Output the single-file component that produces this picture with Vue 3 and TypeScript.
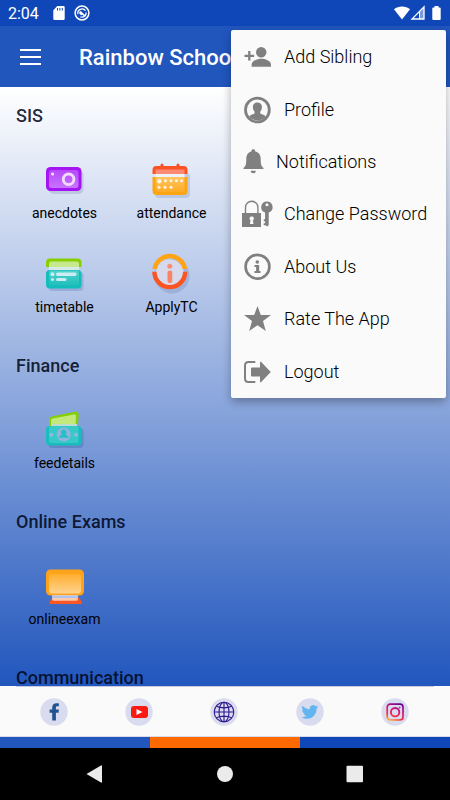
<script setup lang="ts">
interface Tile {
  id: string
  label: string
}
interface Section {
  title: string
  tiles: Tile[]
}
interface MenuEntry {
  id: string
  label: string
}

const sections: Section[] = [
  {
    title: 'SIS',
    tiles: [
      { id: 'camera', label: 'anecdotes' },
      { id: 'calendar', label: 'attendance' },
      { id: 'table', label: 'timetable' },
      { id: 'info', label: 'ApplyTC' },
    ],
  },
  { title: 'Finance', tiles: [{ id: 'money', label: 'feedetails' }] },
  { title: 'Online Exams', tiles: [{ id: 'screen', label: 'onlineexam' }] },
  { title: 'Communication', tiles: [] },
]

const menu: MenuEntry[] = [
  { id: 'add', label: 'Add Sibling' },
  { id: 'profile', label: 'Profile' },
  { id: 'bell', label: 'Notifications' },
  { id: 'lock', label: 'Change Password' },
  { id: 'about', label: 'About Us' },
  { id: 'star', label: 'Rate The App' },
  { id: 'logout', label: 'Logout' },
]

const socials: string[] = ['Facebook', 'YouTube', 'Website', 'Twitter', 'Instagram']
</script>

<template>
  <div class="screen">
    <div class="status">
      <span class="clock">2:04</span>
      <svg class="sd" viewBox="0 0 12 14" aria-hidden="true">
        <path d="M4.300 0H10.500a1.200 1.200 0 0 1 1.200 1.200V12.800a1.200 1.200 0 0 1-1.200 1.200H1.500a1.200 1.200 0 0 1-1.200-1.200V4.200z" fill="#fff" />
        <path d="M4.500 2v2.500M6.900 2v2.500M9.300 2v2.500" stroke="#0f47b8" stroke-width="1" />
      </svg>
      <svg class="dnd" viewBox="0 0 16 16" aria-hidden="true">
        <circle cx="8" cy="8" r="6.900" fill="none" stroke="#fff" stroke-width="1.500" />
        <path d="M3.900 9.200A4.300 4.300 0 0 1 11.500 5.600M12.200 7.500a4.300 4.300 0 0 1-5.800 4.300" fill="none" stroke="#fff" stroke-width="1.300" />
        <path d="M5.300 6.800l1.500-.8 5.200 5-1.300.8L8 9.600l-.7 1-2-1.800z" fill="#fff" />
      </svg>
      <svg class="signals" viewBox="0 0 50 16" aria-hidden="true">
        <path d="M1 4.300C5.500.5 12.500.5 17 4.300L9 14.500z" fill="#fff" />
        <path d="M31 1.800V14H19z" fill="none" stroke="#fff" stroke-width="1.300" />
        <path d="M31 2v12h-5V7.500z" fill="#fff" opacity=".45" />
        <path d="M26.500 7v7" stroke="#fff" stroke-width="1" />
        <path d="M41.500 1h4v1.500h1.200a1 1 0 0 1 1 1V14a1 1 0 0 1-1 1h-6.400a1 1 0 0 1-1-1V3.500a1 1 0 0 1 1-1h1.200z" fill="#fff" />
      </svg>
    </div>

    <header class="appbar">
      <button class="burger" type="button" aria-label="Open navigation">
        <svg viewBox="0 0 22 16" aria-hidden="true">
          <path d="M0 1h21M0 8h21M0 15h21" stroke="#fff" stroke-width="2" />
        </svg>
      </button>
      <h1>Rainbow School</h1>
    </header>

    <main class="content">
      <section v-for="section in sections" :key="section.title">
        <h2>{{ section.title }}</h2>
        <div v-if="section.tiles.length" class="tiles">
          <a v-for="tile in section.tiles" :key="tile.id" class="tile" href="#">
            <svg v-if="tile.id === 'camera'" viewBox="0 0 48 48" aria-hidden="true">
              <defs>
                <linearGradient id="violet" x1="0" y1="0" x2="0" y2="1">
                  <stop offset="0" stop-color="#b748fb" /><stop offset="1" stop-color="#c774ff" />
                </linearGradient>
              </defs>
              <rect x="7.500" y="14" width="35" height="24" rx="5" fill="#7388b7" opacity=".28" />
              <rect x="5" y="11" width="35.500" height="24" rx="4.500" fill="#a514f3" />
              <rect x="8" y="14" width="29.500" height="18" rx="2.500" fill="url(#violet)" />
              <circle cx="27.600" cy="23.300" r="5.300" fill="none" stroke="#f1dcff" stroke-width="2.900" />
              <circle cx="11.600" cy="18" r="1.500" fill="#f6eaff" />
            </svg>
            <svg v-else-if="tile.id === 'calendar'" viewBox="0 0 48 48" aria-hidden="true">
              <defs>
                <linearGradient id="amber" x1="0" y1="0" x2="0" y2="1">
                  <stop offset="0" stop-color="#ffc665" /><stop offset="1" stop-color="#ffab25" />
                </linearGradient>
              </defs>
              <rect x="7" y="17" width="35" height="25" rx="4" fill="#7388b7" opacity=".28" />
              <path d="M14 9v4M30 9v4" stroke="#f44f25" stroke-width="3" stroke-linecap="round" />
              <path d="M4.500 18v-4a4 4 0 0 1 4-4h27a4 4 0 0 1 4 4v4z" fill="#fb5225" />
              <path d="M7.500 18v-4.500h29V18z" fill="#fd8b74" />
              <path d="M7.500 18h29v3h-29z" fill="#fff" opacity=".75" />
              <path d="M4.500 21h35v14a4 4 0 0 1-4 4h-27a4 4 0 0 1-4-4z" fill="#ffa514" />
              <path d="M7.500 21h29v13a2 2 0 0 1-2 2h-25a2 2 0 0 1-2-2z" fill="url(#amber)" />
              <g fill="#fff4dd">
                <circle cx="11.300" cy="25.300" r="2.200" /><circle cx="17.500" cy="24.800" r="1.500" />
                <circle cx="23" cy="24.800" r="1.500" /><circle cx="28.400" cy="24.800" r="1.500" />
                <circle cx="33.600" cy="24.800" r="1.500" /><circle cx="11" cy="31.300" r="1.500" />
                <circle cx="17" cy="31.300" r="1.500" /><circle cx="23" cy="31.300" r="1.500" />
              </g>
            </svg>
            <svg v-else-if="tile.id === 'table'" viewBox="0 0 48 48" aria-hidden="true">
              <defs>
                <linearGradient id="teal" x1="0" y1="0" x2="0" y2="1">
                  <stop offset="0" stop-color="#50d3cd" /><stop offset="1" stop-color="#20bfbc" />
                </linearGradient>
              </defs>
              <rect x="7.500" y="22" width="35" height="19" rx="4" fill="#5c75b4" opacity=".3" />
              <path d="M5 17v-4.500a4 4 0 0 1 4-4h27.500a4 4 0 0 1 4 4V17z" fill="#88cf00" />
              <path d="M8 20v-6a2.500 2.500 0 0 1 2.500-2.500h25A2.500 2.500 0 0 1 38 14v6z" fill="#c7e98e" />
              <path d="M8 17h30v4H8z" fill="#d8eae8" />
              <rect x="5" y="20" width="35.500" height="18.500" rx="4" fill="#12bdba" />
              <rect x="8" y="20.500" width="30" height="15" rx="2" fill="url(#teal)" />
              <g fill="#ccebf2">
                <circle cx="11.500" cy="24.300" r="2" /><circle cx="11.500" cy="29.500" r="1.600" />
                <rect x="15" y="22.500" width="20.500" height="3.500" rx="1.700" /><rect x="15" y="28" width="10.500" height="3" rx="1.500" />
              </g>
            </svg>
            <svg v-else-if="tile.id === 'info'" viewBox="0 0 48 48" aria-hidden="true">
              <circle cx="24" cy="26" r="17.500" fill="#6079b7" opacity=".28" />
              <circle cx="21.800" cy="23.300" r="14" fill="#d7daed" />
              <path d="M6.600 19a15.400 15.400 0 0 1 30.400 0" fill="none" stroke="#ffa515" stroke-width="4.400" />
              <path d="M6.400 21.700a15.400 15.400 0 1 0 30.800 0" fill="none" stroke="#fb5420" stroke-width="4.400" />
              <circle cx="21.800" cy="16.300" r="2.500" fill="#f99076" />
              <rect x="19.500" y="20.500" width="4.800" height="12.500" rx="2.300" fill="#f98365" />
            </svg>
            <svg v-else-if="tile.id === 'money'" viewBox="0 0 48 48" aria-hidden="true">
              <rect x="7.500" y="22" width="35" height="20" rx="4" fill="#385aa8" opacity=".3" />
              <path d="M8 23V13.500a3 3 0 0 1 2.500-3L34 5.700a3 3 0 0 1 3.700 3L36.500 23z" fill="#85d004" />
              <path d="M10 22v-7.500a2 2 0 0 1 1.700-2L33 8.500a1.500 1.500 0 0 1 1.900 1.500L34.500 22z" fill="#c3e97c" />
              <path d="M10 18h26v4H10z" fill="#bedbd2" />
              <rect x="5" y="20" width="35.500" height="19.500" rx="4" fill="#18bdbc" />
              <rect x="8" y="20" width="29.500" height="17" rx="2" fill="#36c9c7" />
              <circle cx="22.700" cy="28.500" r="7" fill="#90b4df" />
              <path d="M22.700 23.500a2.800 2.800 0 0 1 2.600 3.800l-.7 1.400c1.800.6 2.800 1.300 2.800 3h-9.400c0-1.700 1-2.400 2.800-3l-.7-1.400a2.800 2.800 0 0 1 2.600-3.800z" fill="#27bfc3" />
              <circle cx="10.300" cy="28.700" r="2" fill="#8fb9df" /><circle cx="35" cy="28.700" r="2" fill="#8fb9df" />
            </svg>
            <svg v-else viewBox="0 0 48 48" aria-hidden="true">
              <defs>
                <linearGradient id="display" x1="0" y1="0" x2="0" y2="1">
                  <stop offset="0" stop-color="#ffae2e" /><stop offset="1" stop-color="#ffd38f" />
                </linearGradient>
              </defs>
              <path d="M12.500 35h24.500c1.500 1.500 3.500 3.500 4 7H8.300c.5-3.500 2.500-5.500 4.200-7z" fill="#fd5725" />
              <rect x="5" y="7.500" width="38" height="26" rx="4.500" fill="#ffa31a" />
              <rect x="8" y="12" width="32" height="19.500" rx="3" fill="url(#display)" />
              <path d="M11 33h26v3.800a2 2 0 0 1-2 2H13a2 2 0 0 1-2-2z" fill="#fbc9ac" />
              <path d="M11 33.500h26v2.500H11z" fill="#b1c3ec" />
            </svg>
            <span>{{ tile.label }}</span>
          </a>
        </div>
      </section>
    </main>

    <nav class="social" aria-label="Social links">
      <a v-for="name in socials" :key="name" href="#" :aria-label="name">
        <svg viewBox="0 0 28 28" aria-hidden="true">
          <circle cx="14" cy="14" r="13.700" fill="#d9dbee" />
          <path v-if="name === 'Facebook'" d="M15.900 22.500v-7.800h2.600l.4-3.300h-3V9.700c0-1 .3-1.500 1.500-1.500h1.500V5.400c-.5-.1-1.200-.2-2.300-.2-2.700 0-4.400 1.500-4.400 4.200v2H9.600v3.300h2.600v7.800z" fill="#23538f" />
          <g v-else-if="name === 'YouTube'">
            <rect x="6" y="8" width="17" height="12" rx="3" fill="#f91a12" /><path d="M11.500 11v6l6-3z" fill="#fff" />
          </g>
          <g v-else-if="name === 'Website'" fill="none" stroke="#2c168d" stroke-width="1.100">
            <circle cx="14" cy="14" r="9.800" /><ellipse cx="14" cy="14" rx="5" ry="9.800" />
            <path d="M14 4.200v19.600M4.200 14h19.600M6.300 8.300c4.500 1.800 10.900 1.800 15.400 0M6.300 19.700c4.500-1.800 10.900-1.800 15.400 0" />
          </g>
          <path v-else-if="name === 'Twitter'" transform="translate(5.500 5.500) scale(.7)" d="M23.950 4.570a10 10 0 0 1-2.820.78 4.960 4.960 0 0 0 2.160-2.720c-.95.550-2 .960-3.120 1.180a4.920 4.920 0 0 0-8.380 4.480A13.930 13.930 0 0 1 1.640 3.160a4.920 4.920 0 0 0 1.520 6.570 4.900 4.900 0 0 1-2.230-.61v.06a4.920 4.920 0 0 0 3.950 4.830 5 5 0 0 1-2.210.08 4.940 4.940 0 0 0 4.600 3.420A9.870 9.870 0 0 1 0 19.540a14 14 0 0 0 7.550 2.210c9.050 0 14-7.500 14-13.980 0-.21 0-.42-.02-.63a9.940 9.940 0 0 0 2.460-2.550z" fill="#62b5ef" />
          <g v-else fill="none" stroke="url(#insta)">
            <defs>
              <linearGradient id="insta" gradientUnits="userSpaceOnUse" x1="18" y1="5" x2="10" y2="23">
                <stop offset="0" stop-color="#660094" /><stop offset=".45" stop-color="#e01872" />
                <stop offset=".75" stop-color="#f63342" /><stop offset="1" stop-color="#ffb13c" />
              </linearGradient>
            </defs>
            <rect x="6.200" y="6.200" width="15.800" height="15.800" rx="3" stroke-width="1.700" />
            <circle cx="14.100" cy="14.200" r="4.200" stroke-width="1.900" />
            <circle cx="18.700" cy="9.600" r=".5" stroke-width="1" />
          </g>
        </svg>
      </a>
    </nav>

    <div class="stripe"><i></i><i></i><i></i></div>

    <div class="sysnav">
      <button type="button" aria-label="Back">
        <svg viewBox="0 0 20 20" aria-hidden="true"><path d="M1.500 10L16 1.500q1-.5 1 .5v16q0 1-1 .5z" fill="#ebebeb" /></svg>
      </button>
      <button type="button" aria-label="Home">
        <svg viewBox="0 0 20 20" aria-hidden="true"><circle cx="10" cy="10" r="8" fill="#ebebeb" /></svg>
      </button>
      <button type="button" aria-label="Recent apps">
        <svg viewBox="0 0 20 20" aria-hidden="true"><rect x="1.500" y="1.700" width="16.500" height="16.500" rx="1" fill="#ebebeb" /></svg>
      </button>
    </div>

    <div class="menu" role="menu">
      <button v-for="entry in menu" :key="entry.id" type="button" role="menuitem">
        <svg v-if="entry.id === 'add'" viewBox="0 0 32 32" aria-hidden="true">
          <path d="M8.300 10v9.600M3.500 14.800h9.600" stroke="#808080" stroke-width="2.300" />
          <circle cx="20.200" cy="11.300" r="5.200" fill="#808080" />
          <path d="M10.600 25.800v-2c0-4.200 6.200-6 9.700-6s9.700 1.800 9.700 6v2z" fill="#808080" />
        </svg>
        <svg v-else-if="entry.id === 'profile'" viewBox="0 0 32 32" aria-hidden="true">
          <circle cx="16.400" cy="16" r="11.900" fill="none" stroke="#808080" stroke-width="2.800" />
          <path d="M16.400 8.500c3 0 4.800 2 4.500 5-.1 1.800-.6 3-1.700 4.200-.3 1.600.1 2 1.700 2.600 2 .7 3.200 1.300 3.800 2.400a11 11 0 0 1-16.600 0c.6-1.100 1.800-1.700 3.800-2.400 1.600-.6 2-1 1.700-2.600-1.100-1.200-1.600-2.400-1.700-4.200-.3-3 1.500-5 4.500-5z" fill="#808080" />
        </svg>
        <svg v-else-if="entry.id === 'bell'" class="narrow" viewBox="0 0 24 32" aria-hidden="true">
          <path d="M12.300 3.300a1.700 1.700 0 0 1 1.700 2c3.500.8 5.700 3.700 5.700 7.300 0 5.500.5 7.700 2.800 9.400v1H2.500v-1c2.300-1.700 2.800-3.900 2.800-9.400 0-3.600 2.200-6.500 5.300-7.300a1.700 1.700 0 0 1 1.700-2zM9.800 24.800h5a2.500 2.500 0 0 1-5 0z" fill="#808080" />
        </svg>
        <svg v-else-if="entry.id === 'lock'" viewBox="0 0 32 32" aria-hidden="true">
          <path d="M4.500 16V9.500a6.200 6.200 0 0 1 12.400 0V16" fill="none" stroke="#808080" stroke-width="1.400" />
          <path d="M1 15h19v14H1zM10.600 18.500a2 2 0 0 0-1.100 3.700L8.900 26h3.600l-.6-3.800a2 2 0 0 0-1.300-3.700z" fill="#808080" fill-rule="evenodd" />
          <path d="M26 3.500a5.700 5.700 0 0 1 1.700 11.100V27l-1.500 1.500-1.700-1.200h-1.800v-2h1.400v-2h-1.300v-2h1.300v-6.700A5.700 5.700 0 0 1 26 3.500zM26 5.300a1.500 1.500 0 1 0 0 3 1.500 1.500 0 0 0 0-3z" fill="#808080" fill-rule="evenodd" />
        </svg>
        <svg v-else-if="entry.id === 'about'" viewBox="0 0 32 32" aria-hidden="true">
          <circle cx="16.500" cy="15.700" r="11.900" fill="none" stroke="#808080" stroke-width="2.700" />
          <circle cx="16.300" cy="11" r="1.800" fill="#808080" />
          <path d="M13.500 14h4.700v6h1.300v2h-6v-2h1.600v-4h-1.600z" fill="#808080" />
        </svg>
        <svg v-else-if="entry.id === 'star'" viewBox="0 0 32 32" aria-hidden="true">
          <path d="M16.500 3l3.300 9H30l-8 6.100 2.800 9.900-8.300-5.800L8.200 28 11 18.100 3 12h10.200z" fill="#808080" />
        </svg>
        <svg v-else viewBox="0 0 32 32" aria-hidden="true">
          <path d="M14.300 6H7.500Q4 6 4 9.500v13Q4 26 7.500 26h6.800" fill="none" stroke="#808080" stroke-width="2" />
          <path d="M11 11.500h8V6.500q0-1.500 1.200-.4L29.800 16 20.200 25.900q-1.200 1.100-1.200-.4v-5h-8q-1 0-1-1v-7q0-1 1-1z" fill="#808080" />
        </svg>
        <span>{{ entry.label }}</span>
      </button>
    </div>
  </div>
</template>

<style>
body {
  margin: 0;
  background: #000;
}
</style>

<style scoped>
.screen {
  position: relative;
  display: flex;
  flex-direction: column;
  height: 100vh;
  overflow: hidden;
  font-family: Roboto, "Liberation Sans", sans-serif;
  color: rgba(0, 6, 24, 0.87);
}
svg {
  display: block;
}
button {
  border: 0;
  padding: 0;
  background: none;
  font: inherit;
  color: inherit;
}
a {
  color: inherit;
  text-decoration: none;
}
.status {
  display: flex;
  align-items: center;
  flex: 0 0 26px;
  padding: 0 8px;
  background: #0f47b8;
  color: #fff;
}
.clock {
  padding-top: 2px;
  font-size: 16px;
  line-height: 24px;
}
.sd {
  width: 12px;
  height: 14px;
  margin-left: 14px;
}
.dnd {
  width: 16px;
  height: 16px;
  margin-left: 9px;
}
.signals {
  width: 50px;
  height: 16px;
  margin-left: auto;
  margin-right: -1px;
}
.appbar {
  display: flex;
  align-items: center;
  flex: 0 0 61px;
  padding: 0 20px;
  gap: 37px;
  background: #2156bd;
  color: #fff;
}
.burger svg {
  width: 22px;
  height: 16px;
}
h1 {
  margin: 0;
  padding-top: 2px;
  font-size: 22px;
  font-weight: 500;
  line-height: 28px;
  white-space: nowrap;
}
.content {
  flex: 1 1 0;
  min-height: 0;
  overflow: hidden;
  background: linear-gradient(#fff, #2156bd);
}
section {
  padding-bottom: 4px;
}
h2 {
  margin: 0;
  padding-left: 16px;
  font-size: 18px;
  font-weight: 500;
  line-height: 58px;
}
.tiles {
  display: grid;
  grid-template-columns: repeat(2, 1fr);
  grid-auto-rows: 94px;
  box-sizing: border-box;
  width: 50%;
  padding-left: 11px;
}
.tile {
  display: flex;
  flex-direction: column;
  align-items: center;
  padding-top: 11px;
  font-size: 14px;
  line-height: 18px;
  color: #000;
}
.tile svg {
  width: 48px;
  height: 48px;
}
.social {
  display: grid;
  grid-template-columns: repeat(5, 1fr);
  align-items: center;
  flex: 0 0 51px;
  box-sizing: border-box;
  padding: 2px 12px 0 11px;
  background: linear-gradient(#c9cadf, #c9cadf) center top / calc(100% - 32px) 1px no-repeat, #fafafa;
  border-bottom: 1px solid #d9dbe6;
}
.social a {
  justify-self: center;
}
.social svg {
  width: 28px;
  height: 28px;
}
.stripe {
  display: grid;
  grid-template-columns: repeat(3, 1fr);
  flex: 0 0 11px;
}
.stripe i {
  background: #2156bd;
}
.stripe i:nth-child(2) {
  background: #ff6a00;
}
.stripe i:nth-child(3) {
  background: #0f47b8;
}
.sysnav {
  display: grid;
  grid-template-columns: repeat(3, 1fr);
  align-items: center;
  justify-items: center;
  flex: 0 0 52px;
  padding: 0 30px;
  background: #000;
}
.sysnav svg {
  width: 20px;
  height: 20px;
}
.menu {
  position: absolute;
  top: 30px;
  right: 4px;
  display: grid;
  grid-auto-rows: 1fr;
  box-sizing: border-box;
  width: 215px;
  height: 368px;
  padding-top: 1px;
  border-radius: 2px;
  background: #fafafa;
  box-shadow: 0 4px 10px rgba(0, 0, 0, 0.3);
  color: #000;
}
.menu button {
  display: flex;
  align-items: center;
  gap: 11px;
  padding-left: 10px;
  font-size: 18px;
  font-weight: 300;
  line-height: 24px;
  white-space: nowrap;
}
.menu svg {
  flex: none;
  width: 32px;
  height: 32px;
}
.menu .narrow {
  width: 24px;
}
</style>
